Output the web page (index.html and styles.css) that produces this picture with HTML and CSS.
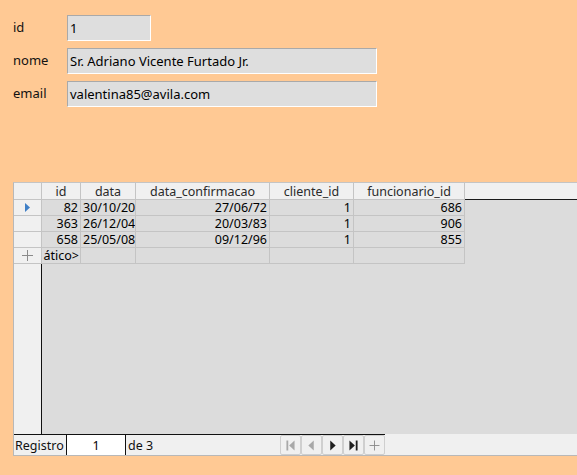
FILE: index.html
```html
<!DOCTYPE html>
<html>
<head>
<meta charset="utf-8">
<link rel="stylesheet" href="styles.css">
</head>
<body>
<div class="form">
  <div class="field">
    <span class="label">id</span>
    <span class="input short">1</span>
  </div>
  <div class="field">
    <span class="label">nome</span>
    <span class="input long">Sr. Adriano Vicente Furtado Jr.</span>
  </div>
  <div class="field">
    <span class="label">email</span>
    <span class="input long">valentina85@avila.com</span>
  </div>
</div>

<div class="grid">
  <div class="table">
    <div class="hc rh"></div>
    <div class="hc">id</div>
    <div class="hc">data</div>
    <div class="hc">data_confirmacao</div>
    <div class="hc">cliente_id</div>
    <div class="hc">funcionario_id</div>
    <div class="hfill"></div>

    <div class="rh"><svg width="7" height="9" viewBox="0 0 7 9"><polygon points="1,0 6,4.5 1,9" fill="#3f7fc6"/></svg></div>
    <div class="c r">82</div>
    <div class="c">30/10/20</div>
    <div class="c r">27/06/72</div>
    <div class="c r">1</div>
    <div class="c r">686</div>
    <div class="fill"></div>

    <div class="rh"></div>
    <div class="c r">363</div>
    <div class="c">26/12/04</div>
    <div class="c r">20/03/83</div>
    <div class="c r">1</div>
    <div class="c r">906</div>
    <div class="fill"></div>

    <div class="rh"></div>
    <div class="c r">658</div>
    <div class="c">25/05/08</div>
    <div class="c r">09/12/96</div>
    <div class="c r">1</div>
    <div class="c r">855</div>
    <div class="fill"></div>

    <div class="rh"><svg width="11" height="11" viewBox="0 0 11 11"><path d="M5.5 0V11M0 5.5H11" stroke="#8a8a8a" stroke-width="1"/></svg></div>
    <div class="c clip">ático&gt;</div>
    <div class="c"></div>
    <div class="c"></div>
    <div class="c"></div>
    <div class="c"></div>
    <div class="fill"></div>
  </div>
  <div class="body">
    <div class="bodyrh"></div>
    <div class="bodyfill"></div>
  </div>
  <div class="nav">
    <div class="navleft">
      <span class="navlabel">Registro</span>
      <span class="navinput">1</span>
      <span class="navof">de 3</span>
      <div class="buttons">
        <span class="btn"><svg width="21" height="19" viewBox="0 0 21 19"><rect x="6" y="4" width="2" height="11" fill="#a8a8a8"/><polygon points="15,4 9,9.5 15,15" fill="#a8a8a8"/></svg></span>
        <span class="btn"><svg width="21" height="19" viewBox="0 0 21 19"><polygon points="13,4 7,9.5 13,15" fill="#a8a8a8"/></svg></span>
        <span class="btn"><svg width="21" height="19" viewBox="0 0 21 19"><polygon points="8,4 14,9.5 8,15" fill="#1e1e1e"/></svg></span>
        <span class="btn"><svg width="21" height="19" viewBox="0 0 21 19"><polygon points="6,4 12,9.5 6,15" fill="#1e1e1e"/><rect x="13" y="4" width="2" height="11" fill="#1e1e1e"/></svg></span>
        <span class="btn"><svg width="21" height="19" viewBox="0 0 21 19"><path d="M10.5 4V15M5 9.5H16" stroke="#8a8a8a" stroke-width="1"/></svg></span>
      </div>
    </div>
    <div class="navright"></div>
  </div>
</div>
</body>
</html>
```

FILE: styles.css
```css
html, body {
  margin: 0;
  padding: 0;
}
body {
  background: #ffc994;
  font-family: "Noto Sans", "DejaVu Sans", sans-serif;
  font-size: 12.5px;
  color: #111;
  width: 577px;
  height: 475px;
  overflow: hidden;
}
.form {
  padding: 15px 0 0 13px;
  display: flex;
  flex-direction: column;
  gap: 7px;
  font-size: 13px;
}
.field {
  display: flex;
  align-items: center;
  height: 26px;
}
.label {
  width: 54px;
  margin-top: -2px;
}
.input {
  box-sizing: border-box;
  height: 26px;
  background: #dedede;
  border-top: 1px solid #a9a9a9;
  border-left: 1px solid #a9a9a9;
  border-right: 1px solid #ffffff;
  border-bottom: 1px solid #ffffff;
  padding: 0 2px;
  display: flex;
  align-items: center;
  color: #000;
}
.short { width: 84px; }
.long { width: 310px; }

.grid {
  margin: 75px 0 0 13px;
  width: 564px;
  border-left: 1px solid #b8b8b8;
  border-top: 1px solid #c4c4c4;
  box-sizing: border-box;
}
.table {
  display: grid;
  grid-template-columns: 28px 39px 55px 134px 84px 111px 1fr;
  grid-auto-rows: 16px;
  grid-template-rows: 17px;
}
.table > div {
  box-sizing: border-box;
  border-right: 1px solid #c4c4c4;
  border-bottom: 1px solid #c4c4c4;
  display: flex;
  align-items: center;
  white-space: nowrap;
  overflow: hidden;
}
.hc {
  background: #f0f0f0;
  justify-content: center;
  color: #2a2a2a;
}
.hfill {
  background: #f0f0f0;
  border-right: none !important;
  border-bottom: 1px solid #1a1a1a !important;
}
.rh {
  background: #f0f0f0;
  justify-content: center;
}
.c {
  background: #dcdcdc;
  padding: 0 2px;
  color: #000;
}
.r { justify-content: flex-end; }
.clip {
  justify-content: flex-end;
  padding: 0 1px 0 0 !important;
}
.fill {
  background: #dcdcdc;
  border: none !important;
}
.body {
  display: flex;
  height: 170px;
}
.bodyrh {
  width: 27px;
  background: #f0f0f0;
  border-right: 1px solid #111;
}
.bodyfill {
  flex: 1;
  background: #dcdcdc;
}
.nav {
  display: flex;
  height: 21px;
  background: #f0f0f0;
  border-bottom: 1px solid #b8b8b8;
}
.navleft {
  width: 371px;
  border-top: 1px solid #111;
  display: flex;
  align-items: stretch;
}
.navright {
  flex: 1;
}
.navlabel {
  width: 51px;
  padding-left: 1px;
  display: flex;
  align-items: center;
}
.navinput {
  width: 58px;
  background: #fff;
  border-left: 1px solid #111;
  border-right: 1px solid #111;
  display: flex;
  align-items: center;
  justify-content: center;
  color: #000;
}
.navof {
  padding-left: 2px;
  display: flex;
  align-items: center;
  width: 152px;
}
.buttons {
  display: flex;
  align-items: flex-end;
}
.btn {
  box-sizing: border-box;
  width: 21px;
  height: 20px;
  border: 1px solid #cfcfcf;
  border-radius: 2px;
  display: flex;
  align-items: center;
  justify-content: center;
}
.btn svg { display: block; }
```
